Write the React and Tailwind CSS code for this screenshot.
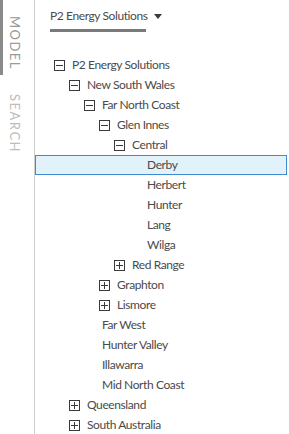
const tree = [
  { label: "P2 Energy Solutions", level: 0, box: "minus" },
  { label: "New South Wales", level: 1, box: "minus" },
  { label: "Far North Coast", level: 2, box: "minus" },
  { label: "Glen Innes", level: 3, box: "minus" },
  { label: "Central", level: 4, box: "minus" },
  { label: "Derby", level: 5, selected: true },
  { label: "Herbert", level: 5 },
  { label: "Hunter", level: 5 },
  { label: "Lang", level: 5 },
  { label: "Wilga", level: 5 },
  { label: "Red Range", level: 4, box: "plus" },
  { label: "Graphton", level: 3, box: "plus" },
  { label: "Lismore", level: 3, box: "plus" },
  { label: "Far West", level: 2 },
  { label: "Hunter Valley", level: 2 },
  { label: "Illawarra", level: 2 },
  { label: "Mid North Coast", level: 2 },
  { label: "Queensland", level: 1, box: "plus" },
  { label: "South Australia", level: 1, box: "plus" },
];

const ToggleBox = ({ type }) => (
  <span className="relative w-[11px] h-[11px] border border-[#3a3a3a] shrink-0">
    <span className="absolute left-[1px] right-[1px] top-[4px] h-[1px] bg-[#3a3a3a]" />
    {type === "plus" && (
      <span className="absolute top-[1px] bottom-[1px] left-[4px] w-[1px] bg-[#3a3a3a]" />
    )}
  </span>
);

const TreeRow = ({ node }) => (
  <div
    className={`flex items-center h-[20px] border ${
      node.selected ? "bg-[#e1f2fa] border-[#3d8bd3]" : "border-transparent"
    }`}
    style={{ paddingLeft: 18 + node.level * 15 }}
  >
    {node.box ? <ToggleBox type={node.box} /> : <span className="w-[11px] shrink-0" />}
    <span className="ml-[7px] text-[12px] leading-[16px] tracking-[-0.4px] text-[#4a4a4a] whitespace-nowrap">
      {node.label}
    </span>
  </div>
);

export default function App() {
  return (
    <div
      className="flex w-[289px] h-[434px] overflow-hidden bg-white"
      style={{ fontFamily: 'Lato, "Noto Sans", sans-serif' }}
    >
      <div className="relative w-[35px] shrink-0 border-r border-[#cfcfcf]">
        <div className="absolute left-0 top-0 w-[3px] h-[75px] bg-[#8a8a8a]" />
        <div className="flex flex-col items-center pt-[16px] pr-[6px] gap-[24px]">
          <span className="[writing-mode:vertical-rl] text-[13px] tracking-[1.5px] text-[#9a9a9a]">
            MODEL
          </span>
          <span className="[writing-mode:vertical-rl] text-[13px] tracking-[1.5px] text-[#bdbdbd]">
            SEARCH
          </span>
        </div>
      </div>
      <div className="flex-1 pr-[2px]">
        <div className="pl-[15px] pt-[8px]">
          <div className="flex flex-col w-fit">
            <div className="flex items-center gap-[6px] text-[12px] leading-[16px] tracking-[-0.4px] text-[#4a4a4a]">
              <span>P2 Energy Solutions</span>
              <span className="w-0 h-0 border-l-[4px] border-r-[4px] border-t-[5px] border-l-transparent border-r-transparent border-t-[#3b3b3b]" />
            </div>
            <div className="mt-[5px] h-[3px] w-[96px] bg-[#7a7a7a]" />
          </div>
        </div>
        <div className="mt-[23px]">
          {tree.map((node, i) => (
            <TreeRow key={i} node={node} />
          ))}
        </div>
      </div>
    </div>
  );
}
